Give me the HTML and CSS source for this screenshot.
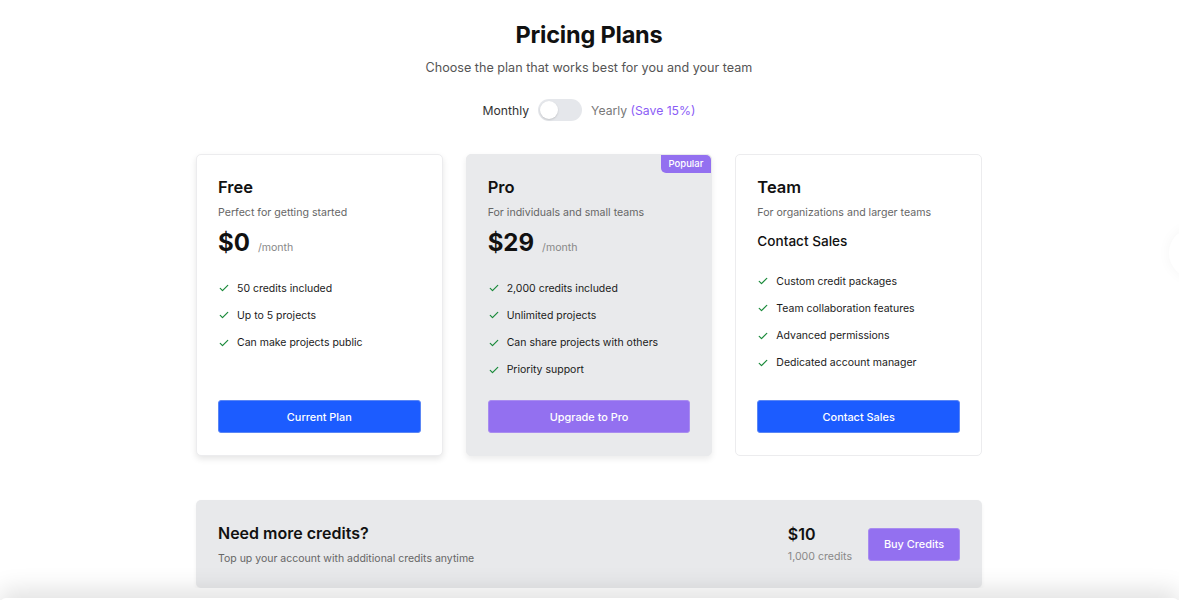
FILE: index.html
```html
<!DOCTYPE html>
<html lang="en">
<head>
    <meta charset="UTF-8">
    <meta name="viewport" content="width=device-width, initial-scale=1.0">
    <title>Pricing Plans</title>
    <link rel="stylesheet" href="styles.css">
</head>
<body>
    <div class="pricing">
        <h1>Pricing Plans</h1>
        <p class="subtitle">Choose the plan that works best for you and your team</p>

        <div class="billing-toggle">
            <span>Monthly</span>
            <button class="switch" aria-label="Toggle billing period"><span class="knob"></span></button>
            <span class="muted">Yearly <span class="save">(Save 15%)</span></span>
        </div>

        <div class="plans">
            <div class="plan plan-current">
                <h2>Free</h2>
                <p class="plan-desc">Perfect for getting started</p>
                <div class="price"><span class="amount">$0</span><span class="period">/month</span></div>
                <ul class="features">
                    <li><svg viewBox="0 0 16 16"><path d="M3 8.5l3 3 7-7"/></svg>50 credits included</li>
                    <li><svg viewBox="0 0 16 16"><path d="M3 8.5l3 3 7-7"/></svg>Up to 5 projects</li>
                    <li><svg viewBox="0 0 16 16"><path d="M3 8.5l3 3 7-7"/></svg>Can make projects public</li>
                </ul>
                <button class="btn btn-blue">Current Plan</button>
            </div>

            <div class="plan plan-popular">
                <span class="badge">Popular</span>
                <h2>Pro</h2>
                <p class="plan-desc">For individuals and small teams</p>
                <div class="price"><span class="amount">$29</span><span class="period">/month</span></div>
                <ul class="features">
                    <li><svg viewBox="0 0 16 16"><path d="M3 8.5l3 3 7-7"/></svg>2,000 credits included</li>
                    <li><svg viewBox="0 0 16 16"><path d="M3 8.5l3 3 7-7"/></svg>Unlimited projects</li>
                    <li><svg viewBox="0 0 16 16"><path d="M3 8.5l3 3 7-7"/></svg>Can share projects with others</li>
                    <li><svg viewBox="0 0 16 16"><path d="M3 8.5l3 3 7-7"/></svg>Priority support</li>
                </ul>
                <button class="btn btn-purple">Upgrade to Pro</button>
            </div>

            <div class="plan">
                <h2>Team</h2>
                <p class="plan-desc">For organizations and larger teams</p>
                <div class="contact">Contact Sales</div>
                <ul class="features">
                    <li><svg viewBox="0 0 16 16"><path d="M3 8.5l3 3 7-7"/></svg>Custom credit packages</li>
                    <li><svg viewBox="0 0 16 16"><path d="M3 8.5l3 3 7-7"/></svg>Team collaboration features</li>
                    <li><svg viewBox="0 0 16 16"><path d="M3 8.5l3 3 7-7"/></svg>Advanced permissions</li>
                    <li><svg viewBox="0 0 16 16"><path d="M3 8.5l3 3 7-7"/></svg>Dedicated account manager</li>
                </ul>
                <button class="btn btn-blue">Contact Sales</button>
            </div>
        </div>

        <div class="credits">
            <div>
                <h3>Need more credits?</h3>
                <p>Top up your account with additional credits anytime</p>
            </div>
            <div class="credits-buy">
                <div class="credits-price">
                    <strong>$10</strong>
                    <span>1,000 credits</span>
                </div>
                <button class="btn btn-purple btn-small">Buy Credits</button>
            </div>
        </div>
    </div>

    <div class="side-fab"></div>
    <div class="bottom-sheet"></div>
</body>
</html>
```

FILE: styles.css
```css
body {
    font-family: Inter, "Noto Sans", Arial, sans-serif;
    background-color: #fff;
    color: #111;
    margin: 0;
    overflow: hidden;
}
.pricing {
    width: 786px;
    margin: 0 0 0 196px;
    padding-top: 19px;
    text-align: center;
}
h1 {
    font-size: 23.5px;
    font-weight: 700;
    margin: 0;
    letter-spacing: -0.2px;
    line-height: 32px;
}
.subtitle {
    font-size: 12.6px;
    color: #555;
    margin: 9px 0 0;
}
.billing-toggle {
    display: flex;
    justify-content: center;
    align-items: center;
    gap: 9px;
    margin-top: 24px;
    font-size: 12.2px;
    color: #333;
}
.billing-toggle .muted {
    color: #777;
}
.save {
    color: #8b5cf6;
}
.switch {
    width: 44px;
    height: 22px;
    border: none;
    border-radius: 11px;
    background-color: #e5e7eb;
    padding: 2px;
    display: flex;
}
.knob {
    width: 18px;
    height: 18px;
    border-radius: 50%;
    background-color: #fff;
    box-shadow: 0 1px 2px rgba(0,0,0,0.15);
}
.plans {
    display: grid;
    grid-template-columns: repeat(3, 1fr);
    gap: 23px;
    margin-top: 33px;
    text-align: left;
}
.plan {
    position: relative;
    display: flex;
    flex-direction: column;
    height: 302px;
    box-sizing: border-box;
    padding: 22px 21px 22px;
    background-color: #fff;
    border: 1px solid #ececee;
    border-radius: 5px;
}
.plan-current {
    box-shadow: 0 3px 6px rgba(0,0,0,0.1);
}
.plan-popular {
    background-color: #e9eaec;
    border-color: #e9eaec;
    box-shadow: 0 3px 6px rgba(0,0,0,0.08);
}
.badge {
    position: absolute;
    top: 0;
    right: 0;
    background-color: #9370f0;
    color: #fff;
    font-size: 9.5px;
    font-weight: 500;
    padding: 3px 8px 4px;
    border-radius: 0 5px 0 5px;
}
.plan h2 {
    font-size: 16.5px;
    font-weight: 600;
    margin: 0;
    line-height: 20px;
}
.plan-desc {
    font-size: 10.6px;
    color: #666;
    margin: 9px 0 0;
}
.price {
    display: flex;
    align-items: baseline;
    gap: 8px;
    margin-top: 8px;
}
.amount {
    font-size: 24px;
    font-weight: 700;
    line-height: 32px;
}
.period {
    font-size: 10.6px;
    color: #888;
}
.contact {
    font-size: 13.6px;
    font-weight: 500;
    margin-top: 12px;
    line-height: 20px;
}
.features {
    list-style: none;
    margin: 21px 0 0;
    padding: 0;
}
.plan .contact + .features {
    margin-top: 22px;
}
.features li {
    display: flex;
    align-items: center;
    gap: 7px;
    font-size: 10.5px;
    color: #1a1a1a;
    height: 16px;
    margin-bottom: 11.3px;
}
.features svg {
    width: 12px;
    height: 12px;
    fill: none;
    stroke: #1a8a3a;
    stroke-width: 1.6;
    stroke-linecap: round;
    stroke-linejoin: round;
}
.btn {
    font-family: inherit;
    font-size: 10.9px;
    font-weight: 500;
    color: #fff;
    border-radius: 3px;
    height: 33px;
    cursor: pointer;
}
.plan .btn {
    margin-top: auto;
    width: 100%;
}
.btn-blue {
    background-color: #1c5cff;
    border: 1px solid #5a86f5;
}
.btn-purple {
    background-color: #9370f0;
    border: 1px solid #a98cf0;
}
.credits {
    display: flex;
    justify-content: space-between;
    align-items: center;
    margin-top: 44px;
    height: 88px;
    box-sizing: border-box;
    padding: 0 22px;
    background-color: #e8e9eb;
    border-radius: 5px;
    text-align: left;
    box-shadow: 0 2px 4px rgba(0,0,0,0.05);
}
.credits h3 {
    font-size: 16px;
    font-weight: 600;
    margin: 0;
}
.credits p {
    font-size: 10.5px;
    color: #666;
    margin: 9px 0 0;
}
.credits-buy {
    display: flex;
    align-items: center;
    gap: 16px;
}
.credits-price strong {
    display: block;
    font-size: 16px;
    font-weight: 600;
}
.credits-price span {
    font-size: 10.6px;
    color: #888;
}
.btn-small {
    width: 92px;
}
.side-fab {
    position: fixed;
    right: -40px;
    top: 228px;
    width: 50px;
    height: 50px;
    border-radius: 50%;
    background-color: #fff;
    box-shadow: 0 0 14px rgba(0,0,0,0.045);
}
.bottom-sheet {
    position: fixed;
    left: 0;
    right: 0;
    top: 598px;
    height: 60px;
    background-color: #fff;
    border-radius: 6px 6px 0 0;
    box-shadow: 0 -8px 24px rgba(0,0,0,0.12);
}
```
